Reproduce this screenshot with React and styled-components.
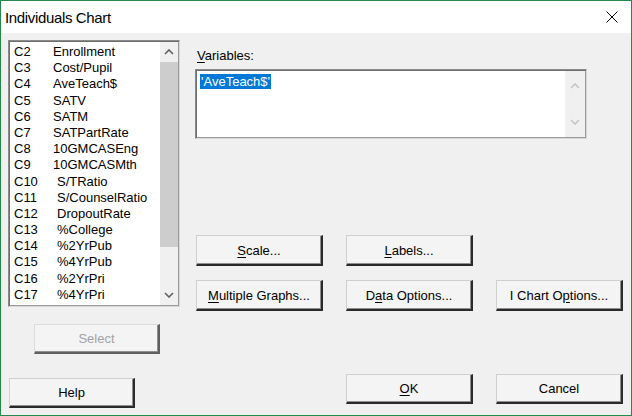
import React from 'react';
import styled, { createGlobalStyle } from 'styled-components';

const GlobalStyle = createGlobalStyle`
  html, body {
    margin: 0;
    padding: 0;
    background: #f0f0f0;
  }
  * {
    box-sizing: border-box;
  }
`;

const Window = styled.div`
  width: 632px;
  height: 416px;
  border: 1px solid #24894c;
  background: #f0f0f0;
  display: flex;
  flex-direction: column;
  font-family: "Liberation Sans", Arial, sans-serif;
  font-size: 13px;
  color: #000;
  overflow: hidden;
`;

const TitleBar = styled.div`
  height: 32px;
  flex: none;
  background: #fff;
  display: flex;
  align-items: center;
  justify-content: space-between;
  padding: 0 12px 0 4px;
`;

const Title = styled.div`
  font-size: 15px;
  letter-spacing: -0.35px;
  color: #000;
`;

const CloseBtn = styled.div`
  width: 14px;
  height: 14px;
  display: flex;
  align-items: center;
  justify-content: center;
`;

const Body = styled.div`
  flex: 1;
  display: grid;
  grid-template-columns: 172px 1fr;
  column-gap: 15px;
  padding: 7px 0 0 7px;
`;

const LeftCol = styled.div`
  display: flex;
  flex-direction: column;
  align-items: flex-start;
`;

const RightCol = styled.div`
  display: flex;
  flex-direction: column;
  align-items: flex-start;
`;

const Sunken = styled.div`
  display: flex;
  background: #fff;
  border: 1px solid;
  border-color: #8a8a8a #d8d8d8 #d8d8d8 #8a8a8a;
  box-shadow: inset 1px 1px 0 #6e6e6e, inset -1px -1px 0 #9a9a9a;
  padding: 1px;
`;

const ListBox = styled(Sunken)`
  width: 172px;
  height: 267px;
`;

const ListItems = styled.div`
  flex: 1;
  padding: 2px 0 0 4px;
  overflow: hidden;
`;

const ListRow = styled.div`
  height: 16.2px;
  line-height: 16px;
  white-space: nowrap;
  display: flex;
`;

const ColId = styled.span`
  display: inline-block;
  width: ${(p) => (p.$wide ? 43 : 39)}px;
`;

const ScrollBar = styled.div`
  width: ${(p) => p.$w}px;
  background: #f0f0f0;
  display: flex;
  flex-direction: column;
  align-items: center;
`;

const ArrowBox = styled.div`
  height: ${(p) => p.$h}px;
  width: 100%;
  display: flex;
  align-items: center;
  justify-content: center;
  flex: none;
`;

const Thumb = styled.div`
  width: 100%;
  height: 185px;
  background: #cdcdcd;
  flex: none;
`;

const Track = styled.div`
  flex: 1;
`;

const VarLabel = styled.div`
  margin: 8px 0 0 2px;
  height: 16px;
  line-height: 16px;
`;

const VarBox = styled(Sunken)`
  margin-top: 5px;
  width: 392px;
  height: 70px;
`;

const VarText = styled.div`
  flex: 1;
  padding: 3px 0 0 3px;
`;

const Highlight = styled.span`
  background: #0078d7;
  color: #fff;
  line-height: 15px;
  padding: 0 1px 0 1px;
`;

const ButtonGrid = styled.div`
  margin-top: 96px;
  margin-left: 1px;
  display: grid;
  grid-template-columns: repeat(3, 127px);
  column-gap: 23px;
  row-gap: 14px;
`;

const BottomRow = styled.div`
  margin-top: 63px;
  margin-left: 151px;
  display: flex;
  gap: 23px;
`;

const Button = styled.div`
  width: ${(p) => p.$w || 127}px;
  height: ${(p) => p.$h || 31}px;
  background: #f4f4f4;
  border-style: solid;
  border-width: 1px 2px 2px 1px;
  border-color: #cfcfcf #2a2a2a #2a2a2a #cfcfcf;
  box-shadow: inset -1px -1px 0 #8f8f8f;
  display: flex;
  align-items: center;
  justify-content: center;
  color: ${(p) => (p.$disabled ? '#a3a3a3' : '#000')};
  white-space: nowrap;
  ${(p) => p.$disabled && 'border-color: #dcdcdc #606060 #606060 #dcdcdc;'}
`;

const SelectBtn = styled(Button)`
  margin: 17px 0 0 26px;
`;

const HelpBtn = styled(Button)`
  margin: 24px 0 0 1px;
`;

const U = styled.span`
  text-decoration: underline;
  text-underline-offset: 2px;
`;

const Chevron = ({ up, color }) => (
  <svg width="10" height="6" viewBox="0 0 10 6">
    <polyline
      points={up ? '1,5 5,1 9,5' : '1,1 5,5 9,1'}
      fill="none"
      stroke={color}
      strokeWidth="1.6"
    />
  </svg>
);

const columns = [
  ['C2', 'Enrollment'],
  ['C3', 'Cost/Pupil'],
  ['C4', 'AveTeach$'],
  ['C5', 'SATV'],
  ['C6', 'SATM'],
  ['C7', 'SATPartRate'],
  ['C8', '10GMCASEng'],
  ['C9', '10GMCASMth'],
  ['C10', 'S/TRatio'],
  ['C11', 'S/CounselRatio'],
  ['C12', 'DropoutRate'],
  ['C13', '%College'],
  ['C14', '%2YrPub'],
  ['C15', '%4YrPub'],
  ['C16', '%2YrPri'],
  ['C17', '%4YrPri'],
];

const App = () => {
  return (
    <>
      <GlobalStyle />
      <Window>
        <TitleBar>
          <Title>Individuals Chart</Title>
          <CloseBtn>
            <svg width="12" height="12" viewBox="0 0 12 12">
              <path d="M0.5 0.5 L11.5 11.5 M11.5 0.5 L0.5 11.5" stroke="#000" strokeWidth="1" />
            </svg>
          </CloseBtn>
        </TitleBar>
        <Body>
          <LeftCol>
            <ListBox>
              <ListItems>
                {columns.map(([id, name]) => (
                  <ListRow key={id}>
                    <ColId $wide={id.length > 2}>{id}</ColId>
                    <span>{name}</span>
                  </ListRow>
                ))}
              </ListItems>
              <ScrollBar $w={18}>
                <ArrowBox $h={20}>
                  <Chevron up color="#606060" />
                </ArrowBox>
                <Thumb />
                <Track />
                <ArrowBox $h={20}>
                  <Chevron color="#606060" />
                </ArrowBox>
              </ScrollBar>
            </ListBox>
            <SelectBtn $w={126} $h={30} $disabled>Select</SelectBtn>
            <HelpBtn $w={126} $h={30}>Help</HelpBtn>
          </LeftCol>
          <RightCol>
            <VarLabel>
              <U>V</U>ariables:
            </VarLabel>
            <VarBox>
              <VarText>
                <Highlight>'AveTeach$'</Highlight>
              </VarText>
              <ScrollBar $w={20}>
                <ArrowBox $h={30}>
                  <Chevron up color="#c4c4c4" />
                </ArrowBox>
                <Track />
                <ArrowBox $h={30}>
                  <Chevron color="#c4c4c4" />
                </ArrowBox>
              </ScrollBar>
            </VarBox>
            <ButtonGrid>
              <Button>
                <U>S</U>cale...
              </Button>
              <Button>
                <U>L</U>abels...
              </Button>
              <div />
              <Button>
                <U>M</U>ultiple Graphs...
              </Button>
              <Button>
                D<U>a</U>ta Options...
              </Button>
              <Button>
                I Chart O<U>p</U>tions...
              </Button>
            </ButtonGrid>
            <BottomRow>
              <Button $h={30}>
                <U>O</U>K
              </Button>
              <Button $h={30}>Cancel</Button>
            </BottomRow>
          </RightCol>
        </Body>
      </Window>
    </>
  );
};

export default App;
